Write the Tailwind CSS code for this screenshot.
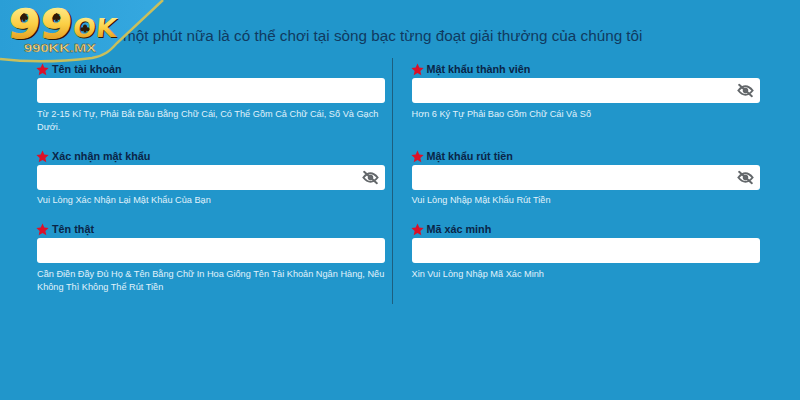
<!DOCTYPE html>
<html lang="vi"><head><meta charset="utf-8">
<script src="https://cdn.jsdelivr.net/npm/@tailwindcss/browser@4"></script>
</head>
<body class="m-0">
<div class="relative w-[800px] h-[400px] overflow-hidden bg-[#2196cb] font-['Liberation_Sans',Arial,sans-serif]">
  <svg class="absolute left-0 top-0 z-10" width="170" height="66" viewBox="0 0 170 66">
    <defs>
      <linearGradient id="g" x1="0" y1="0" x2="0" y2="1"><stop offset="0" stop-color="#fff3a0"/><stop offset="0.5" stop-color="#fbcf45"/><stop offset="1" stop-color="#d98a16"/></linearGradient>
      <linearGradient id="b" x1="0" y1="0" x2="1" y2="0"><stop offset="0" stop-color="#2a9ed6"/><stop offset="1" stop-color="#35a8e0"/></linearGradient>
    </defs>
    <path d="M0 0H163L117 43C110 51 104 56 92 58C60 62 25 62 0 59Z" fill="url(#b)"/>
    <path d="M163 0L117 43C110 51 104 56 92 58C60 62 25 62 0 59" fill="none" stroke="#c9bf5c" stroke-width="2.500"/>
    <g font-family="'DejaVu Sans',sans-serif" font-weight="700">
      <g transform="translate(4 1) skewX(-6)">
        <text x="7" y="37" font-size="40" fill="#2e1a06" stroke="#2e1a06" stroke-width="1" textLength="64" lengthAdjust="spacingAndGlyphs" transform="translate(1.500 1.500)">99</text>
        <text x="7" y="37" font-size="40" fill="url(#g)" stroke="url(#g)" stroke-width="1" textLength="64" lengthAdjust="spacingAndGlyphs">99</text>
      </g>
      <g transform="translate(5 0) skewX(-6)">
        <text x="71" y="37" font-size="26" fill="#2e1a06" textLength="44" lengthAdjust="spacingAndGlyphs" transform="translate(1 1)">OK</text>
        <text x="71" y="37" font-size="26" fill="url(#g)" textLength="44" lengthAdjust="spacingAndGlyphs">OK</text>
      </g>
    </g>
    <path d="M24 13c-2 2-4 3-4 5 0 2 2 2.500 3 1.500l-.5 2h3l-.5-2c1 1 3 .5 3-1.500 0-2-2-3-4-5z" fill="#2e1a06"/>
    <path d="M56.500 13c-2 2-4 3-4 5 0 2 2 2.500 3 1.500l-.5 2h3l-.5-2c1 1 3 .5 3-1.500 0-2-2-3-4-5z" fill="#2e1a06"/>
    <path d="M85 24.500a2 2 0 0 1 1.800 2.900 2 2 0 1 1-.8 3l.5 2h-3l.5-2a2 2 0 1 1-.8-3A2 2 0 0 1 85 24.500z" fill="#2e1a06"/>
    <text x="24" y="52" font-family="'Liberation Sans',sans-serif" font-weight="700" font-size="10" fill="#f7e08a" stroke="#4a3310" stroke-width="0.3" textLength="72" lengthAdjust="spacingAndGlyphs">990KK.MX</text>
  </svg>

  <div class="pt-[27px] pl-[37px] pr-[40px]">
    <h1 class="h-[18px] text-[15.250px] leading-[18px] font-normal text-[#103a60] whitespace-nowrap pl-[86px]">một phút nữa là có thể chơi tại sòng bạc từng đoạt giải thưởng của chúng tôi</h1>
    <div class="flex mt-[13px]">
      <div class="w-[348px] flex flex-col">
        <div class="h-[87px]">
          <label class="flex items-center h-[20px] pt-[2px] text-[10.800px] font-bold text-[#0a2547]"><svg class="w-[13px] h-[13px] mr-[1px] -ml-[1px] shrink-0" viewBox="0 0 24 24"><path fill="#dc1028" d="M12 1l3.300 7.400 8 .8-6 5.400 1.700 7.900-7-4-7 4 1.700-7.900-6-5.400 8-.8z"/></svg><span class="ml-[2px]">Tên tài khoản</span></label>
          <div class="h-[25px] bg-white rounded-[3px]"></div>
          <p class="mt-[5px] text-[9.200px] leading-[13px] text-[#e0f2fb]">Từ 2-15 Kí Tự, Phải Bắt Đầu Bằng Chữ Cái, Có Thể Gồm Cả Chữ Cái, Số Và Gạch Dưới.</p>
        </div>
        <div class="h-[73px]">
          <label class="flex items-center h-[20px] pt-[2px] text-[10.800px] font-bold text-[#0a2547]"><svg class="w-[13px] h-[13px] mr-[1px] -ml-[1px] shrink-0" viewBox="0 0 24 24"><path fill="#dc1028" d="M12 1l3.300 7.400 8 .8-6 5.400 1.700 7.900-7-4-7 4 1.700-7.900-6-5.400 8-.8z"/></svg><span class="ml-[2px]">Xác nhận mật khẩu</span></label>
          <div class="h-[25px] bg-white rounded-[3px] flex items-center justify-end pr-[6px]"><svg class="w-[17px] h-[17px]" viewBox="0 0 24 24" fill="none" stroke="#63676a" stroke-width="2.800" stroke-linecap="round"><path d="M2 12c3-3.800 6.300-6 10-6s7 2.200 10 6c-3 3.800-6.300 6-10 6s-7-2.200-10-6z"/><circle cx="12" cy="12" r="2.500"/><path d="M3 4l18 16"/></svg></div>
          <p class="mt-[4px] text-[9.200px] leading-[13px] text-[#e0f2fb]">Vui Lòng Xác Nhận Lại Mật Khẩu Của Bạn</p>
        </div>
        <div>
          <label class="flex items-center h-[20px] pt-[2px] text-[10.800px] font-bold text-[#0a2547]"><svg class="w-[13px] h-[13px] mr-[1px] -ml-[1px] shrink-0" viewBox="0 0 24 24"><path fill="#dc1028" d="M12 1l3.300 7.400 8 .8-6 5.400 1.700 7.900-7-4-7 4 1.700-7.900-6-5.400 8-.8z"/></svg><span class="ml-[2px]">Tên thật</span></label>
          <div class="h-[25px] bg-white rounded-[3px]"></div>
          <p class="mt-[5px] text-[9.200px] leading-[13px] text-[#e0f2fb]">Cần Điền Đầy Đủ Họ &amp; Tên Bằng Chữ In Hoa Giống Tên Tài Khoản Ngân Hàng, Nếu Không Thì Không Thể Rút Tiền</p>
        </div>
      </div>
      <div class="w-[1px] h-[246px] bg-[#1d5f80] ml-[7px] mr-[19px]"></div>
      <div class="w-[349px] flex flex-col">
        <div class="h-[87px]">
          <label class="flex items-center h-[20px] pt-[2px] text-[10.800px] font-bold text-[#0a2547]"><svg class="w-[13px] h-[13px] mr-[1px] -ml-[1px] shrink-0" viewBox="0 0 24 24"><path fill="#dc1028" d="M12 1l3.300 7.400 8 .8-6 5.400 1.700 7.900-7-4-7 4 1.700-7.900-6-5.400 8-.8z"/></svg><span class="ml-[2px]">Mật khẩu thành viên</span></label>
          <div class="h-[25px] bg-white rounded-[3px] flex items-center justify-end pr-[6px]"><svg class="w-[17px] h-[17px]" viewBox="0 0 24 24" fill="none" stroke="#63676a" stroke-width="2.800" stroke-linecap="round"><path d="M2 12c3-3.800 6.300-6 10-6s7 2.200 10 6c-3 3.800-6.300 6-10 6s-7-2.200-10-6z"/><circle cx="12" cy="12" r="2.500"/><path d="M3 4l18 16"/></svg></div>
          <p class="mt-[5px] text-[9.200px] leading-[13px] text-[#e0f2fb]">Hơn 6 Ký Tự Phải Bao Gồm Chữ Cái Và Số</p>
        </div>
        <div class="h-[73px]">
          <label class="flex items-center h-[20px] pt-[2px] text-[10.800px] font-bold text-[#0a2547]"><svg class="w-[13px] h-[13px] mr-[1px] -ml-[1px] shrink-0" viewBox="0 0 24 24"><path fill="#dc1028" d="M12 1l3.300 7.400 8 .8-6 5.400 1.700 7.900-7-4-7 4 1.700-7.900-6-5.400 8-.8z"/></svg><span class="ml-[2px]">Mật khẩu rút tiền</span></label>
          <div class="h-[25px] bg-white rounded-[3px] flex items-center justify-end pr-[6px]"><svg class="w-[17px] h-[17px]" viewBox="0 0 24 24" fill="none" stroke="#63676a" stroke-width="2.800" stroke-linecap="round"><path d="M2 12c3-3.800 6.300-6 10-6s7 2.200 10 6c-3 3.800-6.300 6-10 6s-7-2.200-10-6z"/><circle cx="12" cy="12" r="2.500"/><path d="M3 4l18 16"/></svg></div>
          <p class="mt-[4px] text-[9.200px] leading-[13px] text-[#e0f2fb]">Vui Lòng Nhập Mật Khẩu Rút Tiền</p>
        </div>
        <div>
          <label class="flex items-center h-[20px] pt-[2px] text-[10.800px] font-bold text-[#0a2547]"><svg class="w-[13px] h-[13px] mr-[1px] -ml-[1px] shrink-0" viewBox="0 0 24 24"><path fill="#dc1028" d="M12 1l3.300 7.400 8 .8-6 5.400 1.700 7.900-7-4-7 4 1.700-7.900-6-5.400 8-.8z"/></svg><span class="ml-[2px]">Mã xác minh</span></label>
          <div class="h-[25px] bg-white rounded-[3px]"></div>
          <p class="mt-[5px] text-[9.200px] leading-[13px] text-[#e0f2fb]">Xin Vui Lòng Nhập Mã Xác Minh</p>
        </div>
      </div>
    </div>
  </div>
</div>
</body></html>
